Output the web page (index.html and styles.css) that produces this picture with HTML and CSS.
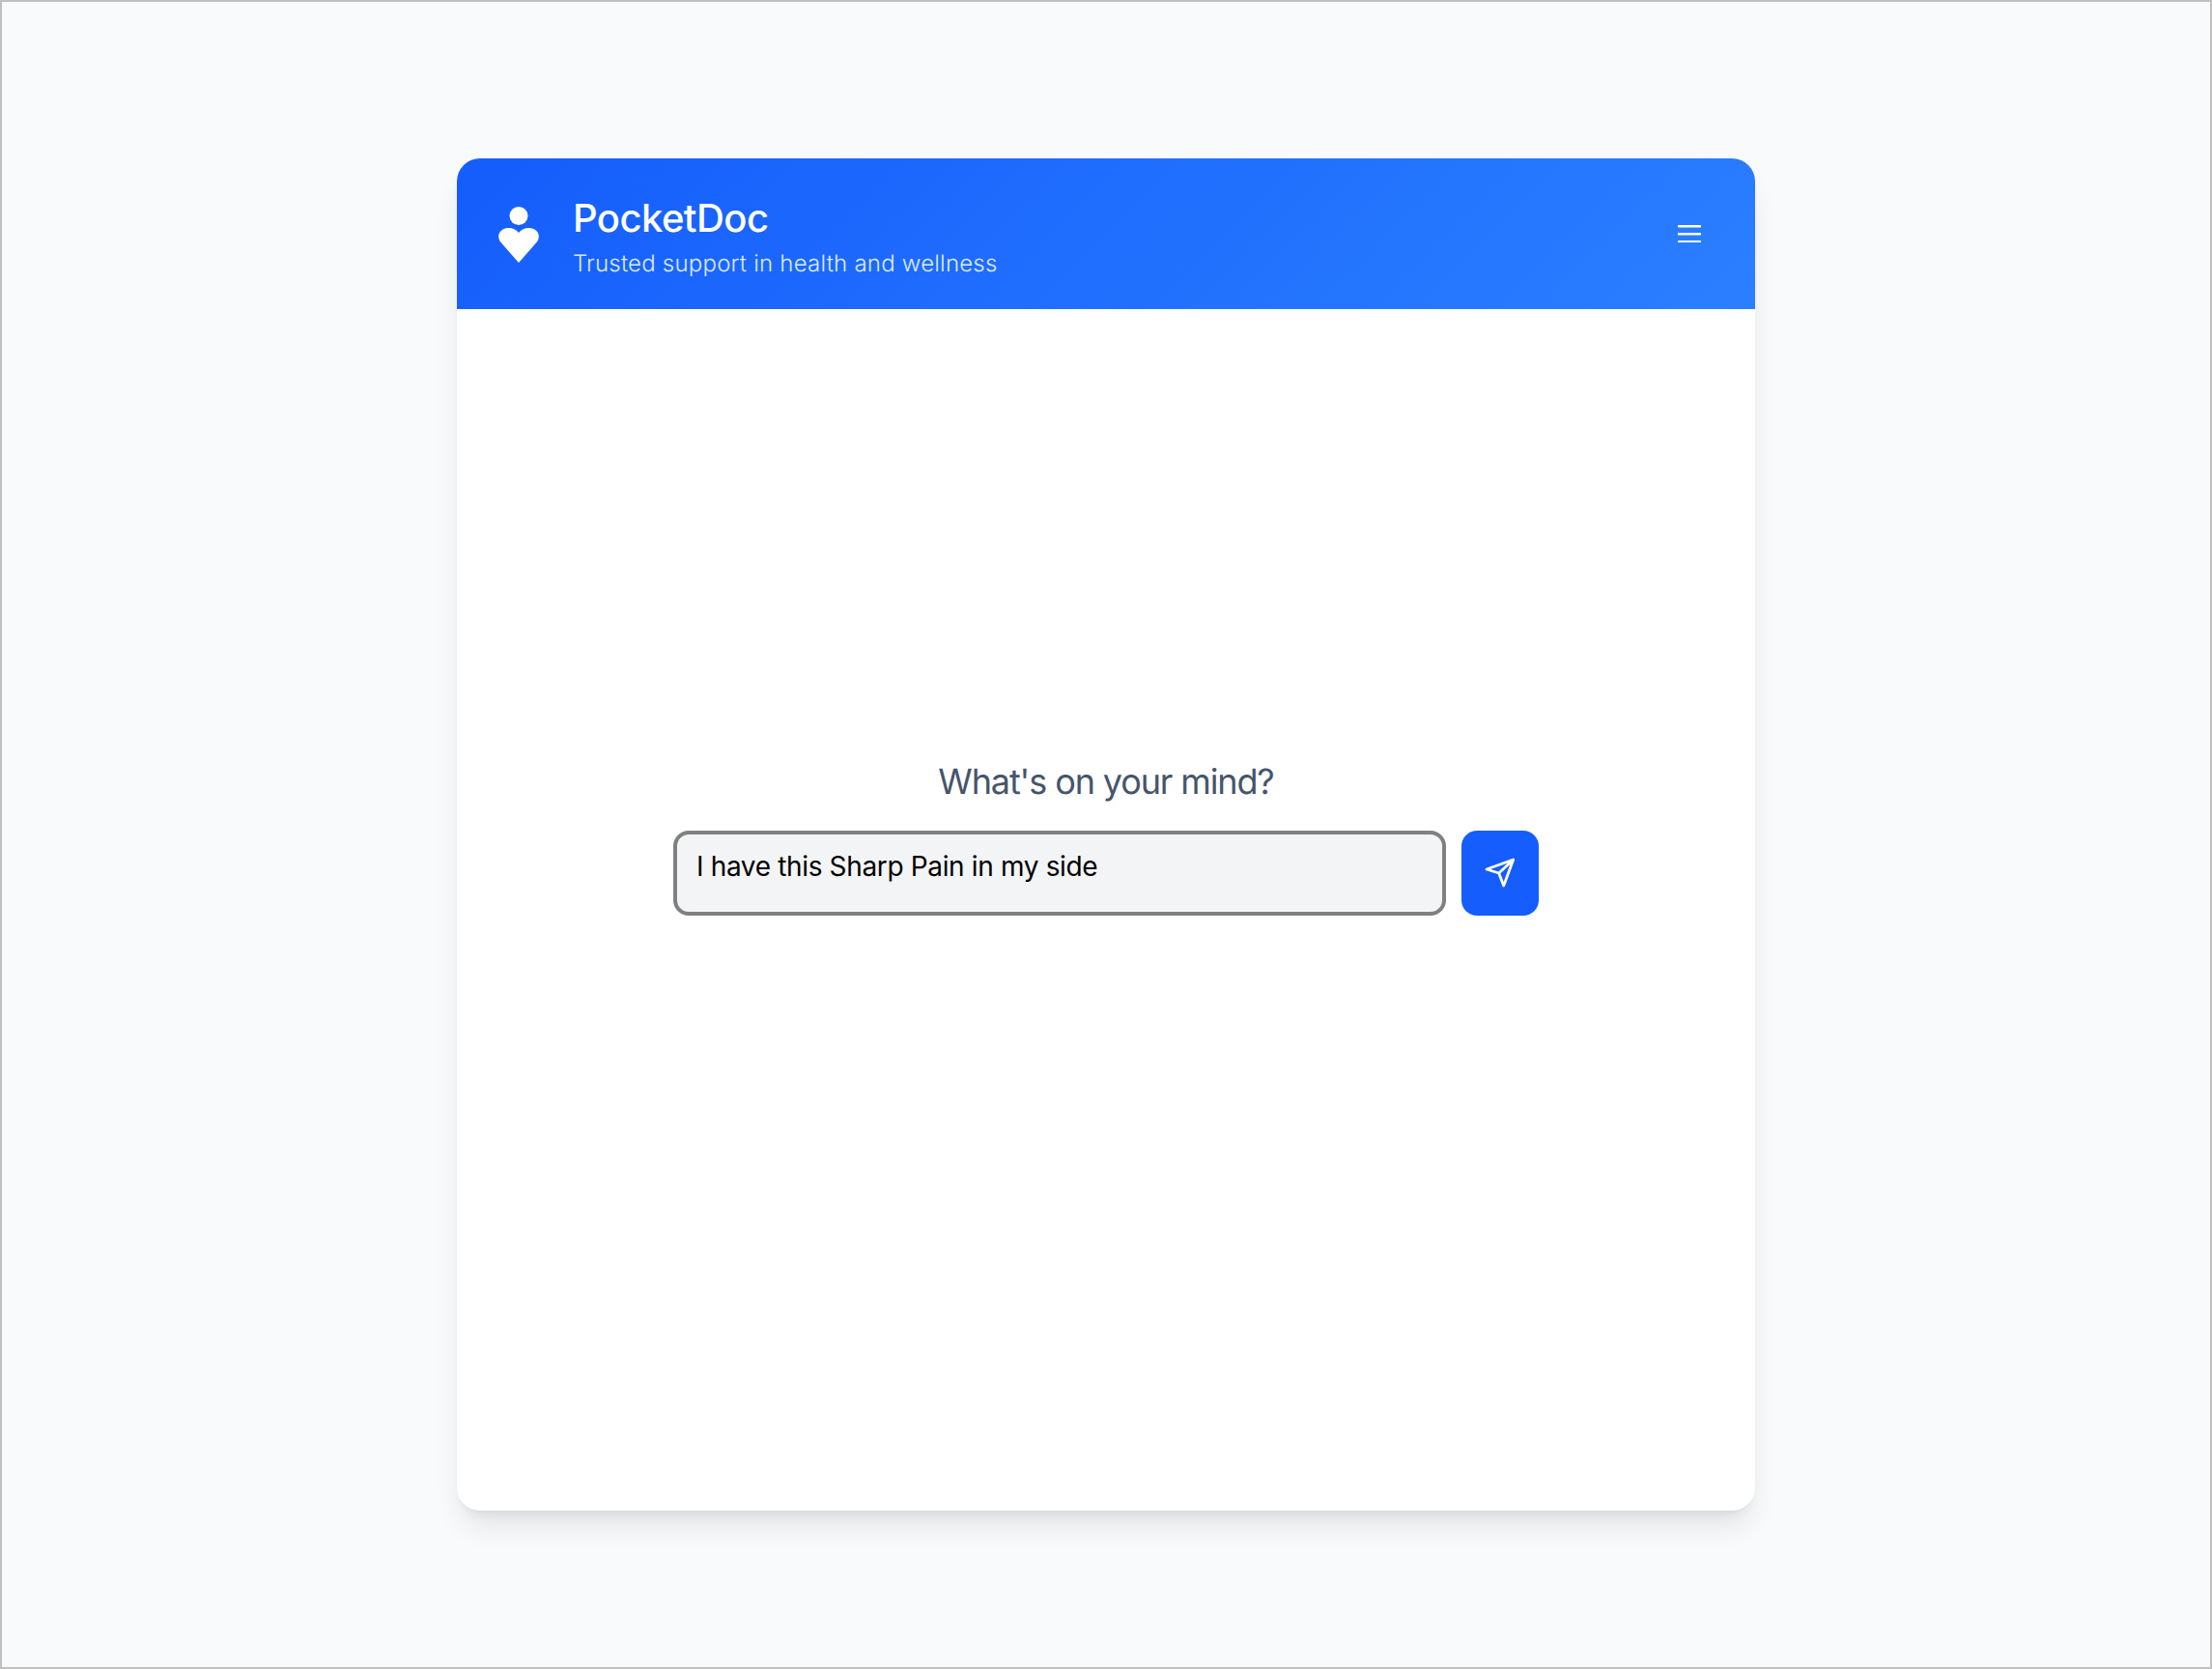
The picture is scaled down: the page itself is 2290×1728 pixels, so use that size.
FILE: index.html
```html
<!DOCTYPE html>
<html lang="en">
<head>
    <meta charset="UTF-8">
    <meta name="viewport" content="width=device-width, initial-scale=1.0">
    <title>PocketDoc</title>
    <link rel="stylesheet" href="styles.css">
</head>
<body>
    <main class="card">
        <header class="card-header">
            <svg class="logo" viewBox="0 0 42 58" aria-hidden="true">
                <circle cx="21" cy="9.5" r="9.5" fill="#fff"/>
                <path d="M21 58 L3 37.5 C-1.500 32.500 -0.500 26 5 23.300 C10.500 20.800 17 22 21 27 C25 22 31.500 20.800 37 23.300 C42.500 26 43.500 32.500 39 37.500 Z" fill="#fff"/>
            </svg>
            <div class="brand">
                <h1>PocketDoc</h1>
                <p>Trusted support in health and wellness</p>
            </div>
            <button class="menu-button" aria-label="Menu">
                <svg viewBox="0 0 24 18" aria-hidden="true">
                    <path d="M1 1.2H23M1 9.2H23M1 17.2H23" fill="none" stroke="#fff" stroke-width="2.6" stroke-linecap="round"/>
                </svg>
            </button>
        </header>

        <section class="chat">
            <h2>What's on your mind?</h2>
            <form class="ask-form">
                <textarea class="ask-input" spellcheck="false">I have this Sharp Pain in my side</textarea>
                <button class="send-button" type="button" aria-label="Send">
                    <svg viewBox="0 0 32 32" aria-hidden="true">
                        <path d="M29.7 2 L2 12 L14.7 16 L19.7 29 Z M29.7 2 L14.7 16" fill="none" stroke="#fff" stroke-width="2.8" stroke-linecap="round" stroke-linejoin="round"/>
                    </svg>
                </button>
            </form>
        </section>
    </main>
</body>
</html>
```

FILE: styles.css
```css
* {
    box-sizing: border-box;
}

body {
    font-family: Inter, "Noto Sans", sans-serif;
    text-rendering: geometricPrecision;
    -webkit-font-smoothing: antialiased;
    margin: 0;
    height: 1728px;
    background-color: #f9fafb;
    border: 2px solid #c0c0c0;
    display: flex;
    justify-content: center;
    align-items: center;
}

.card {
    width: 1344px;
    height: 1400px;
    background-color: #fff;
    border-radius: 24px;
    box-shadow: 0 20px 30px -6px rgba(0, 0, 0, 0.1), 0 8px 12px -8px rgba(0, 0, 0, 0.1);
    display: flex;
    flex-direction: column;
    overflow: hidden;
}

.card-header {
    height: 156px;
    flex-shrink: 0;
    padding: 0 56px 0 43px;
    background: linear-gradient(135deg, #155dfc, #2b7fff);
    color: #fff;
    display: flex;
    align-items: center;
}

.logo {
    width: 42px;
    height: 58px;
    margin-right: 35px;
    margin-top: 2px;
}

.brand {
    flex: 1;
    padding-top: 5px;
}

.brand h1 {
    margin: 0;
    font-size: 40px;
    line-height: 52px;
    font-weight: 550;
    letter-spacing: -0.55px;
}

.brand p {
    margin: 5px 0 0;
    font-size: 24px;
    line-height: 32px;
    font-weight: 350;
    letter-spacing: 0.22px;
    color: #dbeafe;
}

.menu-button {
    width: 24px;
    height: 18px;
    padding: 0;
    border: none;
    background: none;
    display: flex;
}

.menu-button svg {
    width: 24px;
    height: 18px;
}

.chat {
    flex: 1;
    padding-bottom: 153px;
    display: flex;
    flex-direction: column;
    align-items: center;
    justify-content: center;
}

.chat h2 {
    margin: 0 0 25px;
    font-size: 36px;
    line-height: 52px;
    font-weight: 370;
    letter-spacing: -1.12px;
    color: #45556c;
}

.ask-form {
    width: 896px;
    display: flex;
    gap: 16px;
}

.ask-input {
    flex: 1;
    height: 88px;
    padding: 15px 20px;
    border: 4px solid #808080;
    border-radius: 16px;
    background-color: #f3f4f6;
    color: #000;
    font-family: inherit;
    font-size: 28px;
    line-height: 36px;
    letter-spacing: -0.35px;
    resize: none;
    outline: none;
}

.send-button {
    width: 80px;
    height: 88px;
    padding: 0;
    border: none;
    border-radius: 16px;
    background-color: #155dfc;
    display: flex;
    align-items: center;
    justify-content: center;
}

.send-button svg {
    width: 32px;
    height: 32px;
}
```
